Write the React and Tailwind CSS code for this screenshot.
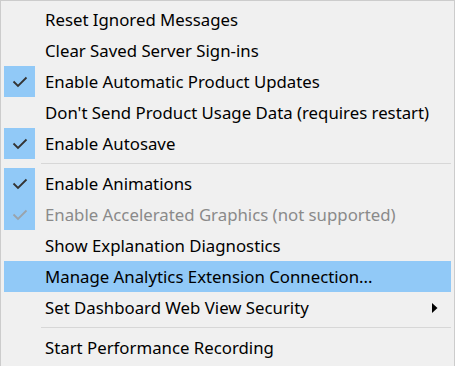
import React from "react";

const items = [
  { label: "Reset Ignored Messages" },
  { label: "Clear Saved Server Sign-ins" },
  { label: "Enable Automatic Product Updates", checked: true },
  { label: "Don't Send Product Usage Data (requires restart)" },
  { label: "Enable Autosave", checked: true },
  { sep: true },
  { label: "Enable Animations", checked: true },
  { label: "Enable Accelerated Graphics (not supported)", checked: true, disabled: true },
  { label: "Show Explanation Diagnostics" },
  { label: "Manage Analytics Extension Connection...", hover: true },
  { label: "Set Dashboard Web View Security", submenu: true },
  { sep: true },
  { label: "Start Performance Recording" },
];

const Check = ({ color }) => (
  <svg width="16" height="12" viewBox="0 0 16 12" fill="none">
    <path d="M1.5 5.5 L6 10 L14.5 1.5" stroke={color} strokeWidth="1.8" />
  </svg>
);

export default function App() {
  return (
    <div className="w-[456px] h-[366px] bg-white overflow-hidden">
      <div
        className="w-[455px] h-[366px] bg-[#f0f0f0] border-l border-t border-r border-[#cccccc] pt-[3px] px-[3px]"
        style={{ fontFamily: '"Noto Sans", sans-serif' }}
      >
        {items.map((it, i) =>
          it.sep ? (
            <div key={i} className="h-[9px] flex items-center pl-[37px]">
              <div className="h-px w-full bg-[#d7d7d7]" />
            </div>
          ) : (
            <div
              key={i}
              className={`h-[31px] flex items-center ${it.hover ? "bg-[#91c9f7]" : ""}`}
            >
              <div
                className={`w-[31px] h-[31px] flex items-center justify-center ${
                  it.checked ? "bg-[#91c9f7]" : ""
                }`}
              >
                {it.checked && <Check color={it.disabled ? "#9aa3ab" : "#333333"} />}
              </div>
              <span
                className={`ml-[10px] pt-[2px] text-[16.8px] leading-none whitespace-nowrap ${
                  it.disabled ? "text-[#8a8a8a]" : "text-black"
                }`}
              >
                {it.label}
              </span>
              {it.submenu && (
                <svg className="ml-auto mr-[13px]" width="6" height="10" viewBox="0 0 6 10">
                  <path d="M0 0 L5.5 5 L0 10 Z" fill="#000" />
                </svg>
              )}
            </div>
          )
        )}
      </div>
    </div>
  );
}
